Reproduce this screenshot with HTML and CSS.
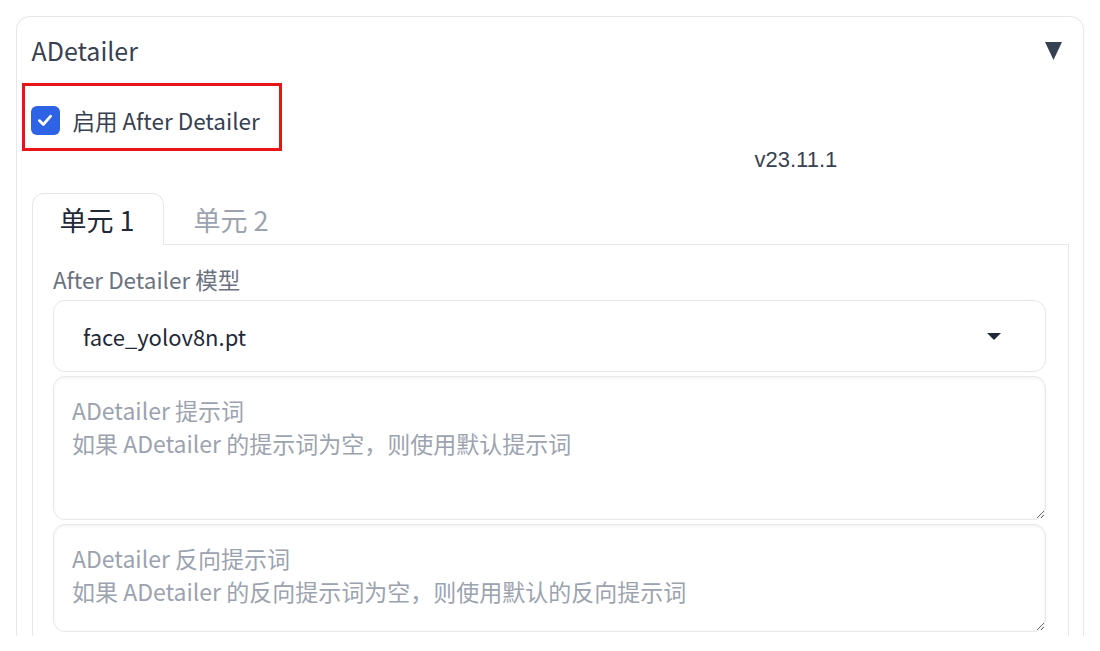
FILE: index.html
```html
<!DOCTYPE html>
<html lang="zh-CN">
<head>
    <meta charset="UTF-8">
    <meta name="viewport" content="width=device-width, initial-scale=1.0">
    <title>ADetailer</title>
    <link rel="stylesheet" href="styles.css">
</head>
<body>
    <div class="panel">
        <div class="panel-header">
            <span class="panel-title">ADetailer</span>
            <svg class="collapse-icon" width="17" height="18" viewBox="0 0 17 18">
                <polygon points="0,0 17,0 8.5,18" fill="#374151"/>
            </svg>
        </div>

        <div class="highlight">
            <label class="check-row">
                <span class="checkbox">
                    <svg width="18" height="18" viewBox="0 0 16 16">
                        <path d="M3 8.5 L6.5 12 L13 4.5" fill="none" stroke="#fff" stroke-width="2.4" stroke-linecap="round" stroke-linejoin="round"/>
                    </svg>
                </span>
                <span class="check-label">启用 After Detailer</span>
            </label>
        </div>

        <div class="version">v23.11.1</div>

        <div class="tabs">
            <div class="tab-nav">
                <button class="tab active">单元 1</button>
                <button class="tab">单元 2</button>
            </div>
            <div class="tab-body">
                <div class="field-label">After Detailer 模型</div>
                <div class="dropdown">
                    <span>face_yolov8n.pt</span>
                    <span class="caret"></span>
                </div>
                <textarea class="prompt tall" placeholder="ADetailer 提示词&#10;如果 ADetailer 的提示词为空，则使用默认提示词"></textarea>
                <textarea class="prompt short" placeholder="ADetailer 反向提示词&#10;如果 ADetailer 的反向提示词为空，则使用默认的反向提示词"></textarea>
            </div>
        </div>
    </div>
</body>
</html>
```

FILE: styles.css
```css
body {
    margin: 0;
    padding: 16px 16px 0 16px;
    background-color: #fff;
    font-family: "Noto Sans CJK SC", "Noto Sans", sans-serif;
    color: #374151;
}
.panel {
    height: 619px;
    overflow: hidden;
    border: 1.5px solid #e5e7eb;
    border-bottom: none;
    border-radius: 14px 14px 0 0;
    padding: 0 14.5px;
}
.panel-header {
    display: flex;
    justify-content: space-between;
    align-items: center;
    padding: 15px 7px 0 0;
    height: 36px;
}
.panel-title {
    font-size: 25px;
    line-height: 34px;
    color: #374151;
}
.collapse-icon {
    margin-top: 2px;
}
.highlight {
    display: inline-block;
    margin: 15px 0 0 -10px;
    border: 3px solid #e8141a;
    padding: 19px 19px 13px 6px;
}
.check-row {
    display: flex;
    align-items: center;
    gap: 13px;
}
.checkbox {
    width: 29px;
    height: 29px;
    border-radius: 6px;
    background-color: #2f63e6;
    display: flex;
    align-items: center;
    justify-content: center;
}
.check-label {
    font-size: 22.5px;
    line-height: 30px;
    color: #374151;
}
.version {
    margin: -3px 0 0 723px;
    font-family: "Liberation Sans", Arial, sans-serif;
    font-size: 22px;
    line-height: 24px;
    color: #374151;
}
.tabs {
    margin-top: 21px;
}
.tab-nav {
    display: flex;
}
.tab {
    font-family: inherit;
    font-size: 27px;
    line-height: 50px;
    height: 52px;
    padding: 0 28px 0 27px;
    border: 1.5px solid transparent;
    border-bottom: none;
    background: none;
    color: #9ca3af;
    margin-bottom: -1.5px;
    position: relative;
}
.tab.active {
    color: #1f2937;
    border-color: #e5e7eb;
    border-radius: 12px 12px 0 0;
    background-color: #fff;
}
.tab + .tab {
    margin-left: 2px;
}
.tab-body {
    border: 1.5px solid #e5e7eb;
    border-bottom: none;
    padding: 19px 21.5px 0 20.5px;
    height: 400px;
}
.field-label {
    font-size: 22.5px;
    line-height: 30px;
    color: #6b7280;
    margin-bottom: 6px;
}
.dropdown {
    height: 70px;
    border: 1.5px solid #e5e7eb;
    border-radius: 12px;
    display: flex;
    align-items: center;
    justify-content: space-between;
    padding: 0 44px 0 29px;
    font-size: 22px;
    color: #1f2937;
    margin-bottom: 4px;
}
.caret {
    width: 0;
    height: 0;
    border-left: 7px solid transparent;
    border-right: 7px solid transparent;
    border-top: 7px solid #1f2937;
    margin-top: 2px;
}
.prompt {
    display: block;
    box-sizing: border-box;
    width: 100%;
    margin: 0 0 4px 0;
    border: 1.5px solid #e5e7eb;
    border-radius: 12px;
    padding: 17px 18px;
    font-family: inherit;
    font-size: 23px;
    line-height: 33px;
    color: #1f2937;
    resize: vertical;
    box-shadow: inset 0 1px 3px rgba(0, 0, 0, 0.06);
    outline: none;
}
.prompt::placeholder {
    color: #9ca3af;
}
.prompt.tall {
    height: 144px;
}
.prompt.short {
    height: 108px;
}
```
